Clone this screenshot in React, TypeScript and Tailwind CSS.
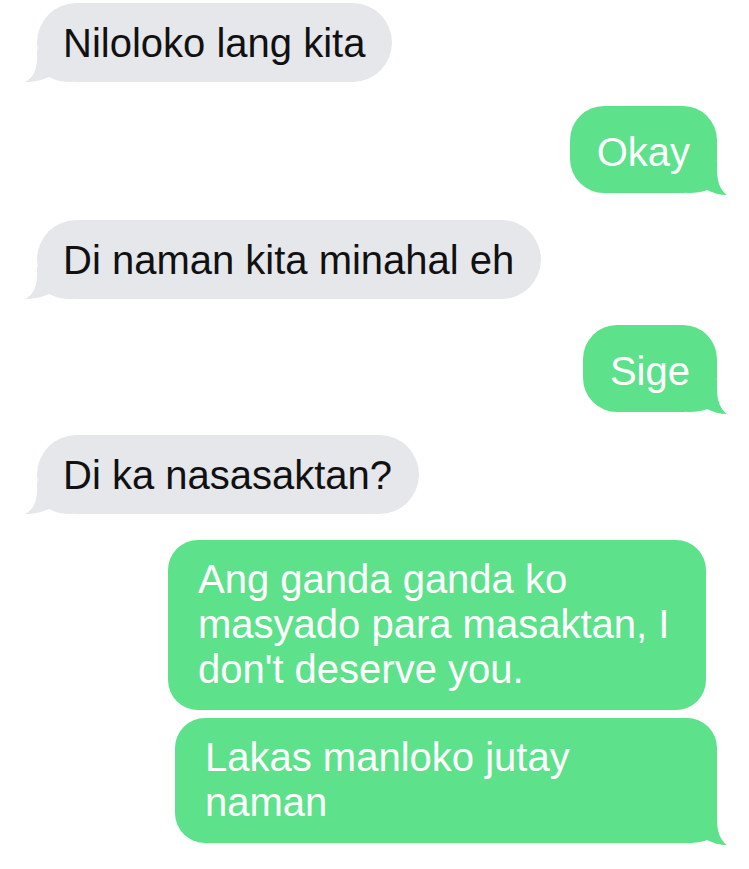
import React from "react";

const GRAY = "#e6e7eb";
const GREEN = "#5de28b";

function GrayTail() {
  return (
    <svg
      className="absolute left-[-12px] bottom-0"
      width="48"
      height="32"
      viewBox="0 0 48 32"
    >
      <path
        d="M12 0 L12 8 C12 20 8 28 0 32 C8 32 18 30 24 27 C30 30 36 32 48 32 L48 0 Z"
        fill={GRAY}
      />
    </svg>
  );
}

function GreenTail() {
  return (
    <svg
      className="absolute right-[-10px] bottom-[-2px]"
      width="40"
      height="34"
      viewBox="0 0 40 34"
    >
      <path
        d="M30 0 L30 8 C30 20 33 29 40 34 C33 34 26 32 20 29 C15 31 10 32 0 32 L0 0 Z"
        fill={GREEN}
      />
    </svg>
  );
}

function Gray({ text, mt }: { text: string; mt: string }) {
  return (
    <div
      className={`relative self-start ml-[37px] ${mt} rounded-[40px] bg-[#e6e7eb] pl-[26px] pr-[27px] pt-[18px] pb-[16px] text-[40px] leading-[45px] text-[#111] whitespace-nowrap`}
    >
      <GrayTail />
      <span className="relative">{text}</span>
    </div>
  );
}

function GreenSmall({ text, mt }: { text: string; mt: string }) {
  return (
    <div
      className={`relative self-end mr-[32px] ${mt} rounded-[34px] bg-[#5de28b] px-[27px] pt-[24px] pb-[18px] text-[40px] leading-[45px] text-white whitespace-nowrap`}
    >
      <GreenTail />
      <span className="relative">{text}</span>
    </div>
  );
}

export default function App() {
  return (
    <div
      className="w-[749px] h-[869px] bg-white overflow-hidden flex flex-col"
      style={{ fontFamily: '"Liberation Sans", Arial, sans-serif' }}
    >
      <Gray text="Niloloko lang kita" mt="mt-[3px]" />
      <GreenSmall text="Okay" mt="mt-[24px]" />
      <Gray text="Di naman kita minahal eh" mt="mt-[27px]" />
      <GreenSmall text="Sige" mt="mt-[26px]" />
      <Gray text="Di ka nasasaktan?" mt="mt-[23px]" />

      <div className="relative self-start ml-[168px] mt-[26px] w-[538px] rounded-[30px] bg-[#5de28b] pl-[30px] pr-[20px] pt-[17px] pb-[18px] text-[40px] leading-[45px] text-white whitespace-nowrap">
        Ang ganda ganda ko
        <br />
        masyado para masaktan, I
        <br />
        don't deserve you.
      </div>

      <div className="relative self-start ml-[175px] mt-[8px] w-[542px] rounded-[30px] bg-[#5de28b] pl-[30px] pr-[20px] pt-[17px] pb-[18px] text-[40px] leading-[45px] text-white whitespace-nowrap">
        <GreenTail />
        <span className="relative">
          Lakas manloko jutay
          <br />
          naman
        </span>
      </div>
    </div>
  );
}
